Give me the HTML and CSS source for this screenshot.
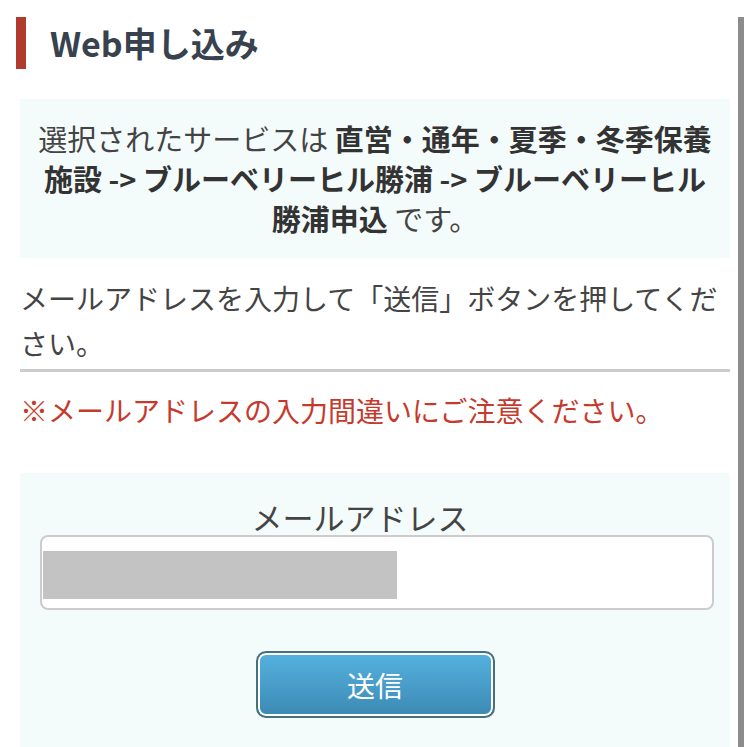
FILE: index.html
```html
<!DOCTYPE html>
<html lang="ja">
  <head>
    <meta charset="UTF-8" />
    <meta name="viewport" content="width=device-width, initial-scale=1.0" />
    <title>Web申し込み</title>
    <link rel="stylesheet" href="styles.css">
  </head>
  <body>
    <div class="page">
      <h1 class="page-title">Web申し込み</h1>

      <!-- selected service -->
      <div class="info-box">
        選択されたサービスは <strong>直営・通年・夏季・冬季保養施設 -&gt; ブルーベリーヒル勝浦 -&gt; ブルーベリーヒル勝浦申込</strong> です。
      </div>

      <p class="lead">メールアドレスを入力して「送信」ボタンを押してください。</p>
      <hr class="rule" />
      <p class="notice">※メールアドレスの入力間違いにご注意ください。</p>

      <!-- mail form -->
      <div class="form-box">
        <div class="form-label">メールアドレス</div>
        <div class="field">
          <span class="masked"></span>
        </div>
        <div class="actions">
          <button class="submit-btn" type="button">送信</button>
        </div>
      </div>
    </div>
  </body>
</html>
```

FILE: styles.css
```css
body {
  margin: 0;
  background: #fff;
  font-family: "Noto Sans CJK JP", "Noto Sans", sans-serif;
  color: #444;
}

.page {
  width: 710px;
  min-height: 747px;
  padding: 0 8px 0 20px;
  border-right: 6px solid #8c8c8c;
}

/* Title with red bar */
.page-title {
  margin: 17px 0 0 -4px;
  padding-left: 24px;
  border-left: 10px solid #b03a2e;
  font-size: 34px;
  line-height: 52px;
  font-weight: bold;
  color: #37424e;
}

.info-box {
  margin-top: 30px;
  padding: 19px 15px 20px;
  background: #f4fbfb;
  text-align: center;
  font-size: 29px;
  line-height: 40px;
  color: #444;
}

.info-box strong {
  color: #333;
}

.lead {
  margin: 18px 0 0;
  font-size: 28px;
  line-height: 45px;
  color: #444;
}

.rule {
  margin: 3px 0 0;
  border: 0;
  height: 3px;
  background: #cccccc;
}

.notice {
  margin: 16px 0 0;
  font-size: 28px;
  line-height: 45px;
  color: #c63a2d;
}

/* Form box */
.form-box {
  margin-top: 40px;
  padding: 26px 16px 40px 20px;
  background: #f4fbfb;
}

.form-label {
  padding-right: 34px;
  text-align: center;
  font-size: 31px;
  line-height: 36px;
  color: #444;
}

.field {
  box-sizing: border-box;
  height: 75px;
  padding: 14px 0 0 1px;
  background: #fff;
  border: 2px solid #cccccc;
  border-radius: 8px;
}

.masked {
  display: block;
  width: 354px;
  height: 48px;
  background: #c3c3c3;
}

.actions {
  margin-top: 41px;
  text-align: center;
}

.submit-btn {
  width: 239px;
  height: 67px;
  margin-left: -4px;
  border: 2px solid #45707f;
  border-radius: 10px;
  box-shadow: inset 0 0 0 2px #fff;
  background: linear-gradient(#56b1df, #3b8ab4);
  color: #fff;
  font-family: "Noto Sans CJK JP", sans-serif;
  font-size: 28px;
}
```
